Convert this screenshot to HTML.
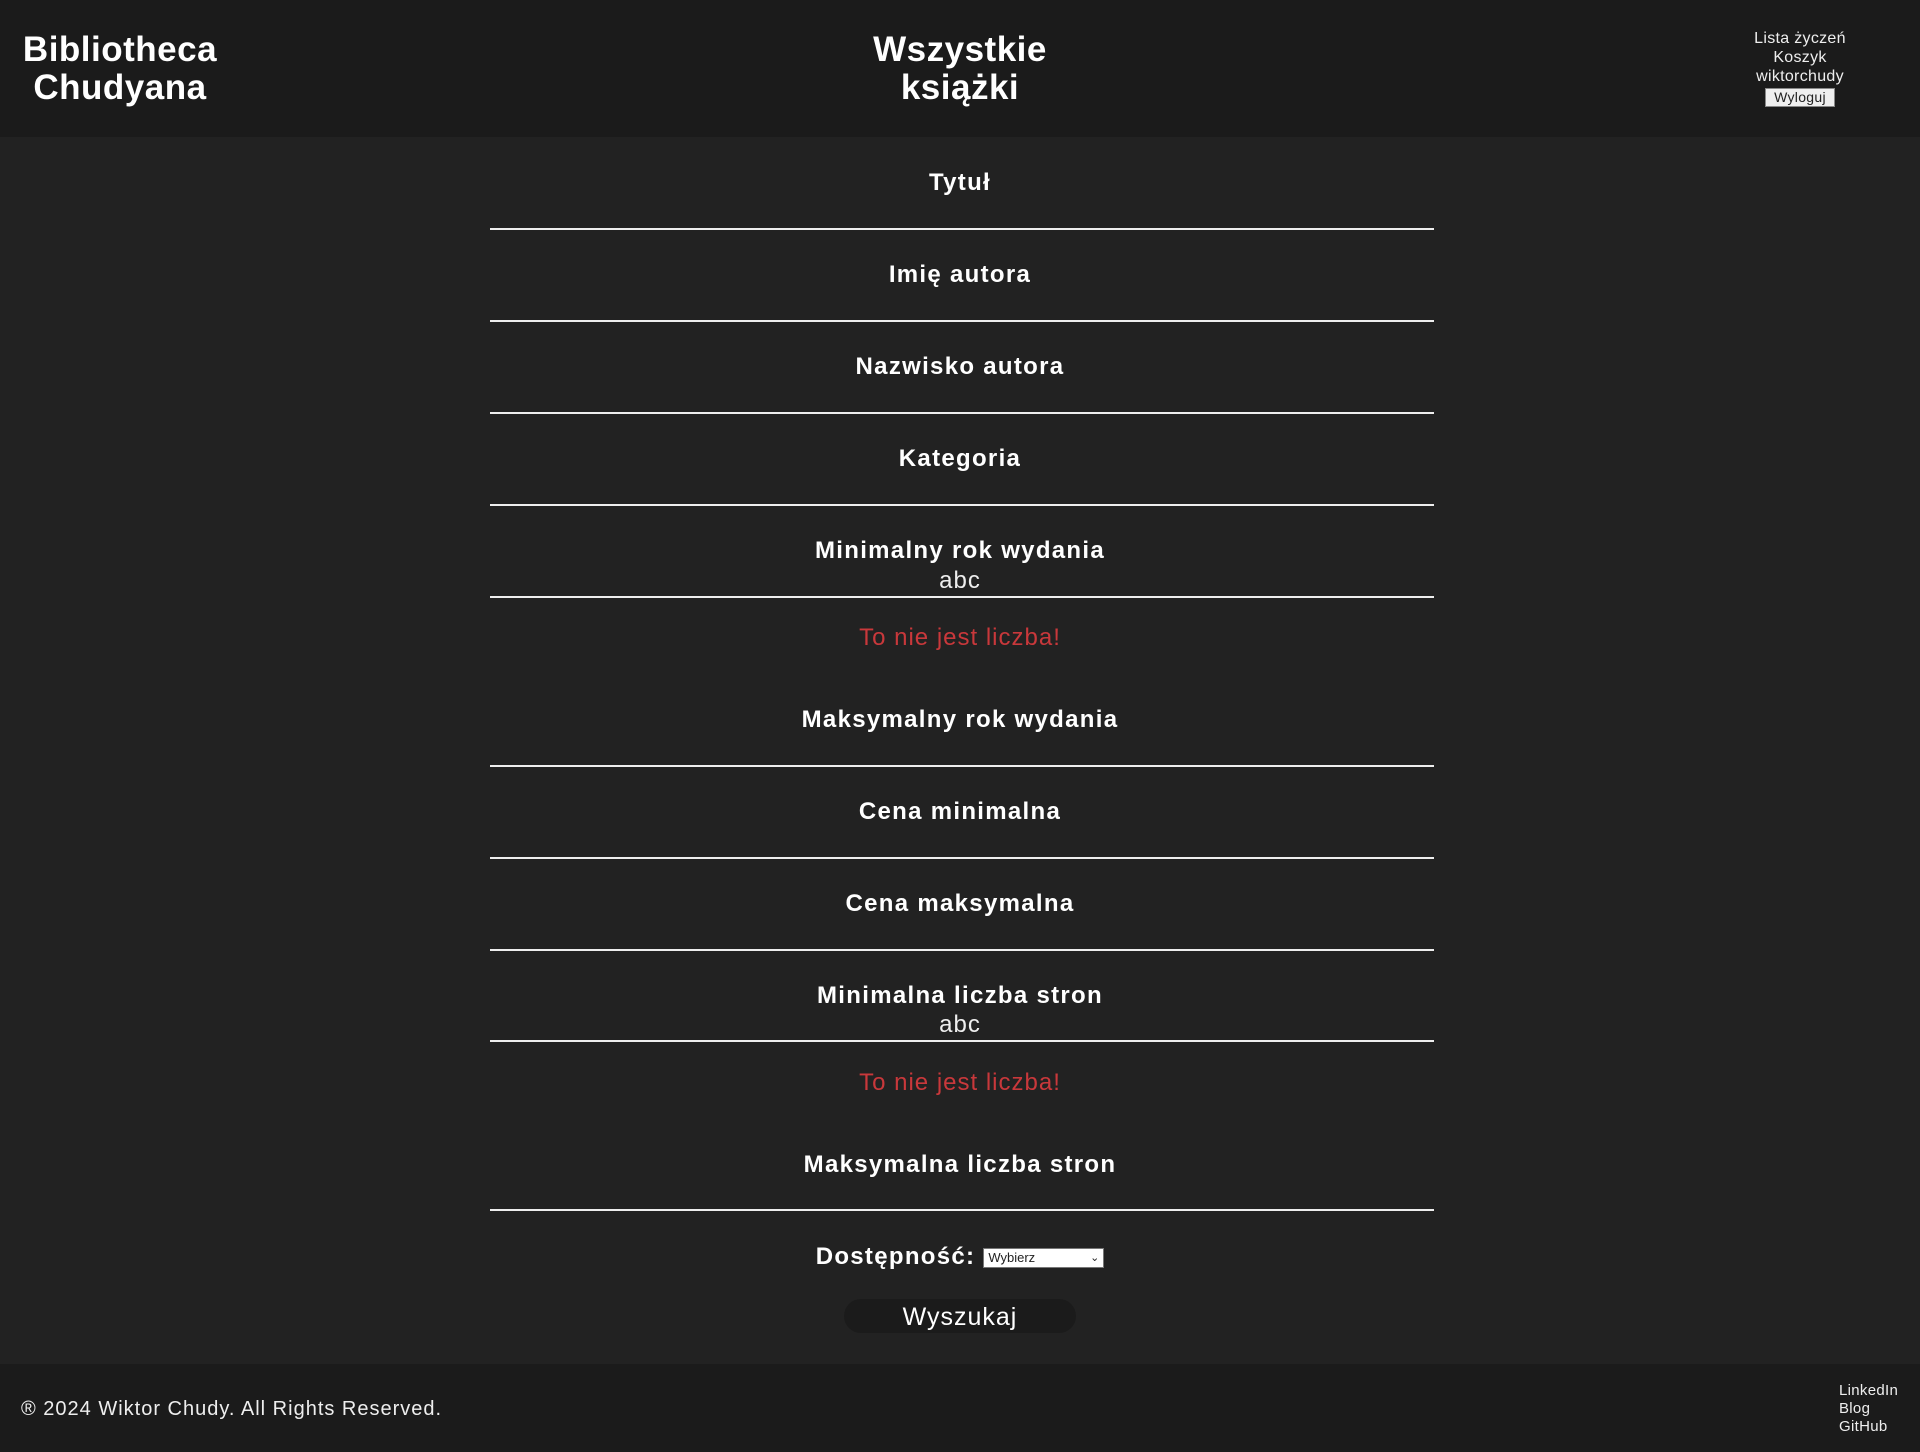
<!DOCTYPE html>
<html><head><meta charset="utf-8"><style>
*{margin:0;padding:0;box-sizing:border-box}
body{width:1920px;height:1452px;background:#222;color:#fff;font-family:"Liberation Sans","DejaVu Sans",sans-serif;position:relative;overflow:hidden}
.hdr{position:absolute;left:0;top:0;width:1920px;height:137px;background:#1b1b1b}
.ftr{position:absolute;left:0;top:1364px;width:1920px;height:88px;background:#1b1b1b}
.t{position:absolute;left:0;width:1920px;text-align:center;height:30px;line-height:30px;white-space:nowrap}
.lbl{font-weight:bold;font-size:24px;letter-spacing:1.3px}
.abc{font-size:24px;color:#eee;letter-spacing:1px}
.err{font-size:24px;color:#c9383b;letter-spacing:1px}
.ln{position:absolute;left:490px;width:944px;height:2px;background:#eee}
.big{position:absolute;font-weight:bold;font-size:35px;line-height:38px;text-align:center;letter-spacing:0.5px}
</style></head><body>
<div class="hdr"></div>
<div class="big" style="left:0;width:240px;top:31px">Bibliotheca<br>Chudyana</div>
<div class="big" style="left:760px;width:400px;top:31px">Wszystkie<br>książki</div>
<div style="position:absolute;left:1700px;width:200px;top:29px;text-align:center;font-size:16px;line-height:19px;color:#eee;letter-spacing:0.3px">Lista życzeń<br>Koszyk<br>wiktorchudy<br><span style="display:inline-block;background:#efefef;color:#222;border:1px solid #888;font-size:14px;line-height:17px;padding:0 8px;margin-top:2px">Wyloguj</span></div>

<div class="t lbl" style="top:168px">Tytuł</div>
<div class="ln" style="top:228px"></div>
<div class="t lbl" style="top:260px">Imię autora</div>
<div class="ln" style="top:320px"></div>
<div class="t lbl" style="top:352px">Nazwisko autora</div>
<div class="ln" style="top:412px"></div>
<div class="t lbl" style="top:444px">Kategoria</div>
<div class="ln" style="top:504px"></div>
<div class="t lbl" style="top:536px">Minimalny rok wydania</div>
<div class="t abc" style="top:566px">abc</div>
<div class="ln" style="top:596px"></div>
<div class="t err" style="top:623px">To nie jest liczba!</div>
<div class="t lbl" style="top:705px">Maksymalny rok wydania</div>
<div class="ln" style="top:765px"></div>
<div class="t lbl" style="top:797px">Cena minimalna</div>
<div class="ln" style="top:857px"></div>
<div class="t lbl" style="top:889px">Cena maksymalna</div>
<div class="ln" style="top:949px"></div>
<div class="t lbl" style="top:981px">Minimalna liczba stron</div>
<div class="t abc" style="top:1010px">abc</div>
<div class="ln" style="top:1040px"></div>
<div class="t err" style="top:1068px">To nie jest liczba!</div>
<div class="t lbl" style="top:1150px">Maksymalna liczba stron</div>
<div class="ln" style="top:1209px"></div>
<div class="t lbl" style="top:1242px">Dostępność: <span style="display:inline-block;vertical-align:middle;width:121px;height:20px;background:#fff;border:1px solid #777;color:#222;font-weight:normal;font-size:13px;line-height:18px;text-align:left;padding-left:4px;position:relative;letter-spacing:0">Wybierz<span style="position:absolute;right:4px;top:0;font-size:11px">&#x2304;</span></span></div>
<div style="position:absolute;left:844px;top:1299px;width:232px;height:34px;border-radius:17px;background:#1b1b1b;text-align:center;font-size:25px;line-height:36px;letter-spacing:1px">Wyszukaj</div>

<div class="ftr"></div>
<div style="position:absolute;left:21px;top:1397px;font-size:20px;line-height:24px;color:#eee;letter-spacing:1px">® 2024 Wiktor Chudy. All Rights Reserved.</div>
<div style="position:absolute;left:1839px;top:1382px;font-size:15px;line-height:18px;color:#eee;letter-spacing:0.3px">LinkedIn<br>Blog<br>GitHub</div>
</body></html>
